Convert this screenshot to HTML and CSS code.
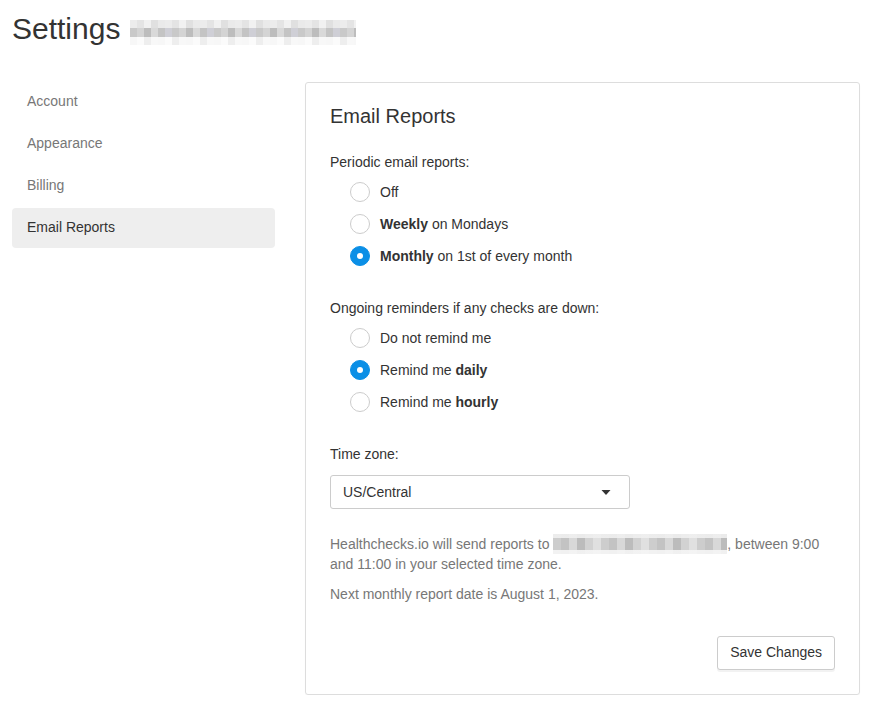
FILE: index.html
```html
<!DOCTYPE html>
<html>
<head>
<meta charset="utf-8">
<title>Settings</title>
<link rel="stylesheet" href="styles.css">
</head>
<body>
<div class="page">
  <h1 class="title">Settings <span class="blur-title"><span class="b1"></span><span class="b2"></span><span class="b3"></span></span></h1>
  <div class="layout">
    <ul class="sidenav">
      <li><a>Account</a></li>
      <li><a>Appearance</a></li>
      <li><a>Billing</a></li>
      <li class="active"><a>Email Reports</a></li>
    </ul>
    <div class="panel">
      <h2 class="panel-title">Email Reports</h2>

      <div class="group">
        <div class="group-label">Periodic email reports:</div>
        <div class="radio"><span class="dot"></span><span>Off</span></div>
        <div class="radio"><span class="dot"></span><span><b>Weekly</b> on Mondays</span></div>
        <div class="radio"><span class="dot checked"></span><span><b>Monthly</b> on 1st of every month</span></div>
      </div>

      <div class="group">
        <div class="group-label">Ongoing reminders if any checks are down:</div>
        <div class="radio"><span class="dot"></span><span>Do not remind me</span></div>
        <div class="radio"><span class="dot checked"></span><span>Remind me <b>daily</b></span></div>
        <div class="radio"><span class="dot"></span><span>Remind me <b>hourly</b></span></div>
      </div>

      <div class="group tz">
        <div class="group-label">Time zone:</div>
        <div class="select">
          <span>US/Central</span>
          <svg class="caret" width="10" height="5" viewBox="0 0 10 5"><path d="M0.5 0 L9.5 0 L5 5 Z" fill="#333"/></svg>
        </div>
      </div>

      <p class="help">Healthchecks.io will send reports to <span class="blur-email"></span>, between 9:00 and 11:00 in your selected time zone.</p>
      <p class="help">Next monthly report date is August 1, 2023.</p>

      <div class="actions">
        <button class="btn">Save Changes</button>
      </div>
    </div>
  </div>
</div>
</body>
</html>
```

FILE: styles.css
```css
* { box-sizing: border-box; }
html, body { margin: 0; padding: 0; background: #fff; }
body {
  font-family: "Liberation Sans", Arial, Helvetica, sans-serif;
  font-size: 14px;
  line-height: 20px;
  color: #333;
}
.page { padding: 12px 12px 0 12px; }
.title {
  margin: 0 0 37px 0;
  font-size: 30px;
  line-height: 33px;
  height: 33px;
  font-weight: normal;
  color: #333;
  display: flex;
  align-items: flex-start;
}
.blur-title {
  display: inline-flex;
  flex-direction: column;
  margin-left: 10px;
  margin-top: 8px;
  width: 226px;
}
.blur-title span { display: block; }
.blur-title .b1 {
  height: 8px;
  background: repeating-linear-gradient(90deg, #ececec 0 7px, #e4e4e4 7px 14px, #f1f1f1 14px 21px, #e0e0e0 21px 28px, #eaeaea 28px 35px);
}
.blur-title .b2 {
  height: 9px;
  background: repeating-linear-gradient(90deg, #c9c9c9 0 7px, #d4d4d4 7px 14px, #bdbdbd 14px 21px, #d9d9d9 21px 28px, #c4c4c4 28px 35px, #cfcfd6 35px 42px);
}
.blur-title .b3 {
  height: 8px;
  background: repeating-linear-gradient(90deg, #f7f7f7 0 7px, #fbfbfb 7px 14px, #eeeeee 14px 21px, #f8f8f8 21px 28px);
}

.layout { display: flex; align-items: flex-start; gap: 30px; }

.sidenav {
  list-style: none;
  margin: 0;
  padding: 0;
  width: 263px;
  display: flex;
  flex-direction: column;
  gap: 2px;
}
.sidenav a {
  display: block;
  padding: 9px 15px 11px 15px;
  color: #777;
  border-radius: 4px;
}
.sidenav .active a { background: #eee; color: #333; }

.panel {
  width: 555px;
  border: 1px solid #ddd;
  border-radius: 3px;
  padding: 22px 24px 24px 24px;
  box-shadow: 0 1px 1px rgba(0,0,0,0.04);
}
.panel-title {
  margin: 0 0 25px 0;
  font-size: 20px;
  line-height: 22px;
  font-weight: normal;
  color: #333;
}
.group { margin-bottom: 26px; }
.group-label { margin-bottom: 4px; }
.radio {
  display: flex;
  align-items: center;
  height: 32px;
  padding-left: 20px;
}
.radio b { font-weight: bold; }
.dot {
  width: 20px;
  height: 20px;
  border-radius: 50%;
  border: 1px solid #ccc;
  background: #fff;
  margin-right: 10px;
  display: flex;
  align-items: center;
  justify-content: center;
  flex-shrink: 0;
}
.dot.checked { background: #0b8fe6; border-color: #0b8fe6; }
.dot.checked::after {
  content: "";
  width: 6px;
  height: 6px;
  border-radius: 50%;
  background: #fff;
}

.tz { margin-bottom: 25px; }
.tz .group-label { margin-bottom: 11px; }
.select {
  width: 300px;
  height: 34px;
  border: 1px solid #ccc;
  border-radius: 3px;
  padding: 0 18px 0 12px;
  display: flex;
  align-items: center;
  justify-content: space-between;
  color: #333;
}
.caret { display: block; }

.help { margin: 0 0 10px 0; color: #777; }
.blur-email {
  display: inline-block;
  vertical-align: top;
  width: 174px;
  height: 20px;
  background:
    linear-gradient(to bottom, rgba(240,240,240,0.9) 0 4px, transparent 4px 16px, rgba(246,246,246,0.9) 16px 20px),
    repeating-linear-gradient(90deg, #cdcdcd 0 8px, #c3c3c3 8px 16px, #d8d8d8 16px 24px, #bcbcbc 24px 32px, #d2d2d2 32px 40px, #e0e0e0 40px 48px);
}

.actions { display: flex; justify-content: flex-end; margin-top: 32px; }
.btn {
  font-family: inherit;
  font-size: 14px;
  line-height: 20px;
  color: #333;
  background: #fff;
  border: 1px solid #ccc;
  border-radius: 3px;
  padding: 5px 12px 7px 12px;
  box-shadow: 0 2px 0 rgba(0,0,0,0.05);
}
```
